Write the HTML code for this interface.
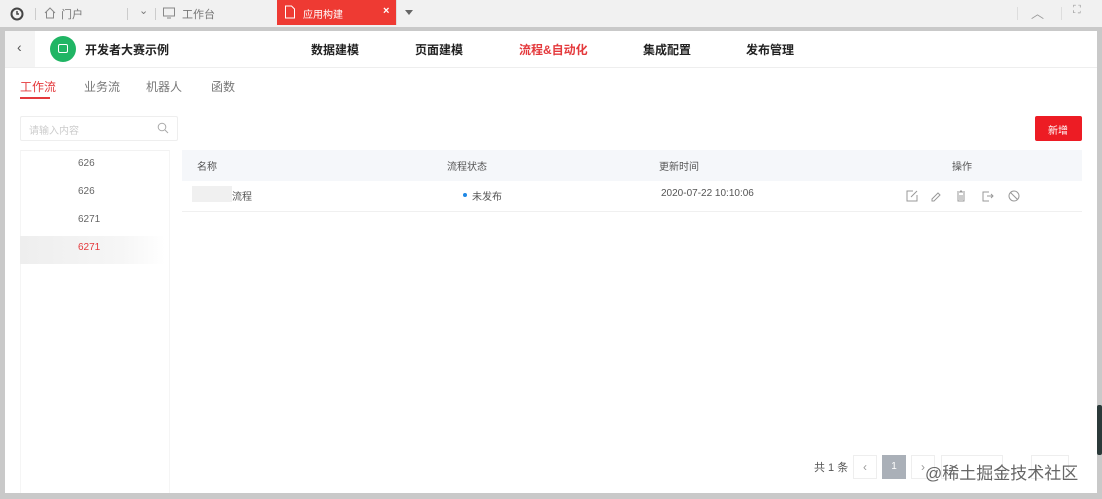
<!DOCTYPE html>
<html><head><meta charset="utf-8"><style>
*{margin:0;padding:0;box-sizing:border-box}
body{width:1102px;height:499px;overflow:hidden;background:#c9c9c9;font-family:"Liberation Sans","Noto Sans CJK SC",sans-serif;position:relative;font-size:12px;color:#333}
.abs{position:absolute}
.top{left:0;top:0;width:1102px;height:27px;background:#f1f1f1}
.main{left:5px;top:31px;width:1092px;height:462px;background:#fff}
.t{position:absolute;white-space:nowrap}
</style></head><body>
<div class="abs top">
  <svg class="abs" style="left:10px;top:7px" width="14" height="14" viewBox="0 0 14 14"><circle cx="7" cy="7" r="5.5" fill="none" stroke="#444" stroke-width="2"/><path d="M7 4v3h2" stroke="#444" stroke-width="1.5" fill="none"/></svg>
  <div class="abs" style="left:35px;top:8px;width:1px;height:12px;background:#ccc"></div>
  <svg class="abs" style="left:43px;top:6px" width="14" height="14" viewBox="0 0 14 14"><path d="M2 7L7 2l5 5M3.5 6v6h7V6" stroke="#888" fill="none"/></svg>
  <span class="t" style="left:61px;top:6px;color:#777;font-size:11px">门户</span>
  <div class="abs" style="left:127px;top:8px;width:1px;height:12px;background:#ccc"></div>
  <span class="t" style="left:139px;top:4px;color:#777;font-size:11px">⌄</span>
  <div class="abs" style="left:155px;top:8px;width:1px;height:12px;background:#ccc"></div>
  <svg class="abs" style="left:162px;top:6px" width="14" height="14" viewBox="0 0 14 14"><rect x="1.5" y="2" width="11" height="8" fill="none" stroke="#888"/><path d="M5 12h4" stroke="#888"/></svg>
  <span class="t" style="left:182px;top:6px;color:#777;font-size:11px">工作台</span>
  <div class="abs" style="left:277px;top:0;width:119px;height:25px;background:#ee3a33"></div>
  <svg class="abs" style="left:284px;top:5px" width="12" height="14" viewBox="0 0 12 14"><path d="M1.5 1h6l3 3v9h-9z" fill="none" stroke="#fff"/></svg>
  <span class="t" style="left:303px;top:6px;color:#fff;font-size:10px">应用构建</span>
  <span class="t" style="left:383px;top:5px;color:#fff;font-size:11px;font-weight:bold">×</span>
  <div class="abs" style="left:396px;top:0;width:1px;height:25px;background:#ddd"></div>
  <div class="abs" style="left:405px;top:10px;border-left:4px solid transparent;border-right:4px solid transparent;border-top:5px solid #666"></div>
  <div class="abs" style="left:1017px;top:7px;width:1px;height:13px;background:#ddd"></div>
  <span class="t" style="left:1031px;top:3px;color:#999;font-size:13px">︿</span>
  <div class="abs" style="left:1061px;top:7px;width:1px;height:13px;background:#ddd"></div>
  <span class="t" style="left:1073px;top:4px;color:#999;font-size:11px">⛶</span>
</div>
<div class="abs main">
  <div class="abs" style="left:0;top:0;width:30px;height:36px;background:#f4f4f4"></div>
  <span class="t" style="left:12px;top:8px;color:#555;font-size:14px">‹</span>
  <div class="abs" style="left:0;top:36px;width:1092px;height:1px;background:#eee"></div>
  <div class="abs" style="left:45px;top:5px;width:26px;height:26px;border-radius:50%;background:#20b564"></div>
  <div class="abs" style="left:53px;top:13px;width:10px;height:9px;border:1.5px solid #fff;border-radius:2px"></div>
  <span class="t" style="left:80px;top:10px;font-size:12px;font-weight:bold;color:#222">开发者大赛示例</span>
  <span class="t" style="left:306px;top:10px;font-weight:bold;color:#222">数据建模</span>
  <span class="t" style="left:410px;top:10px;font-weight:bold;color:#222">页面建模</span>
  <span class="t" style="left:514px;top:10px;font-weight:bold;color:#e4393c">流程&amp;自动化</span>
  <span class="t" style="left:638px;top:10px;font-weight:bold;color:#222">集成配置</span>
  <span class="t" style="left:741px;top:10px;font-weight:bold;color:#222">发布管理</span>

  <span class="t" style="left:15px;top:47px;color:#e4393c">工作流</span>
  <div class="abs" style="left:15px;top:66px;width:30px;height:2px;background:#e4393c"></div>
  <span class="t" style="left:79px;top:47px;color:#777">业务流</span>
  <span class="t" style="left:141px;top:47px;color:#777">机器人</span>
  <span class="t" style="left:206px;top:47px;color:#777">函数</span>

  <div class="abs" style="left:15px;top:85px;width:158px;height:25px;border:1px solid #eee;border-radius:2px"></div>
  <span class="t" style="left:24px;top:91px;color:#ccc;font-size:10px">请输入内容</span>
  <svg class="abs" style="left:152px;top:91px" width="12" height="12" viewBox="0 0 12 12"><circle cx="5" cy="5" r="3.8" fill="none" stroke="#aaa"/><path d="M8 8l3 3" stroke="#aaa"/></svg>
  <div class="abs" style="left:15px;top:119px;width:150px;height:343px;border-left:1px solid #f5f5f5;border-top:1px solid #f2f2f2;border-right:1px solid #f5f5f5"></div>
  <span class="t" style="left:73px;top:127px;color:#666;font-size:10px">626</span>
  <span class="t" style="left:73px;top:155px;color:#666;font-size:10px">626</span>
  <span class="t" style="left:73px;top:183px;color:#666;font-size:10px">6271</span>
  <div class="abs" style="left:15px;top:205px;width:145px;height:28px;background:linear-gradient(90deg,#eee,#f6f6f6 70%,#fff)"></div>
  <span class="t" style="left:73px;top:211px;color:#e4393c;font-size:10px">6271</span>

  <div class="abs" style="left:1030px;top:85px;width:47px;height:25px;background:#ed1c24;border-radius:2px"></div>
  <span class="t" style="left:1043px;top:91px;color:#fff;font-size:10px">新增</span>

  <div class="abs" style="left:177px;top:119px;width:900px;height:31px;background:#f5f7fa"></div>
  <span class="t" style="left:192px;top:127px;color:#555;font-size:10px">名称</span>
  <span class="t" style="left:442px;top:127px;color:#555;font-size:10px">流程状态</span>
  <span class="t" style="left:654px;top:127px;color:#555;font-size:10px">更新时间</span>
  <span class="t" style="left:947px;top:127px;color:#555;font-size:10px">操作</span>
  <div class="abs" style="left:177px;top:180px;width:900px;height:1px;background:#f0f0f0"></div>
  <div class="abs" style="left:187px;top:155px;width:40px;height:16px;background:#f0f0f0"></div>
  <span class="t" style="left:227px;top:157px;color:#555;font-size:10px">流程</span>
  <div class="abs" style="left:458px;top:162px;width:4px;height:4px;border-radius:50%;background:#1e88e5"></div>
  <span class="t" style="left:467px;top:157px;color:#555;font-size:10px">未发布</span>
  <span class="t" style="left:656px;top:157px;color:#555;font-size:10px">2020-07-22 10:10:06</span>
  <svg class="abs" style="left:900px;top:158px" width="120" height="14" viewBox="0 0 120 14" fill="none" stroke="#999">
    <path d="M8 2H2v10h10V6M6 8l6-6"/>
    <path d="M27 10l6-6 2 2-6 6h-2z"/>
    <path d="M52 3h8M53 4v8h6V4M55 2h2M55 6v5M57 6v5"/>
    <path d="M84 3h-6v9h6M82 7h6M86 5l2 2-2 2"/>
    <circle cx="109" cy="7" r="5"/><path d="M105.5 3.5l7 7"/>
  </svg>

  <span class="t" style="left:809px;top:428px;color:#555;font-size:11px">共 1 条</span>
  <div class="abs" style="left:848px;top:424px;width:24px;height:24px;border:1px solid #eee;color:#999;text-align:center;line-height:22px">‹</div>
  <div class="abs" style="left:877px;top:424px;width:24px;height:24px;background:#aab0b8;color:#fff;text-align:center;line-height:24px;font-size:10px">1</div>
  <div class="abs" style="left:906px;top:424px;width:24px;height:24px;border:1px solid #eee;color:#999;text-align:center;line-height:22px">›</div>
  <div class="abs" style="left:936px;top:424px;width:62px;height:24px;border:1px solid #eee"></div>
  <div class="abs" style="left:1026px;top:424px;width:38px;height:24px;border:1px solid #eee"></div>
  <span class="t" style="left:920px;top:428px;color:#666;font-size:17px">@稀土掘金技术社区</span>
</div>
<div class="abs" style="left:1097px;top:405px;width:5px;height:50px;background:#2b3a3a;border-radius:2px"></div>
</body></html>
